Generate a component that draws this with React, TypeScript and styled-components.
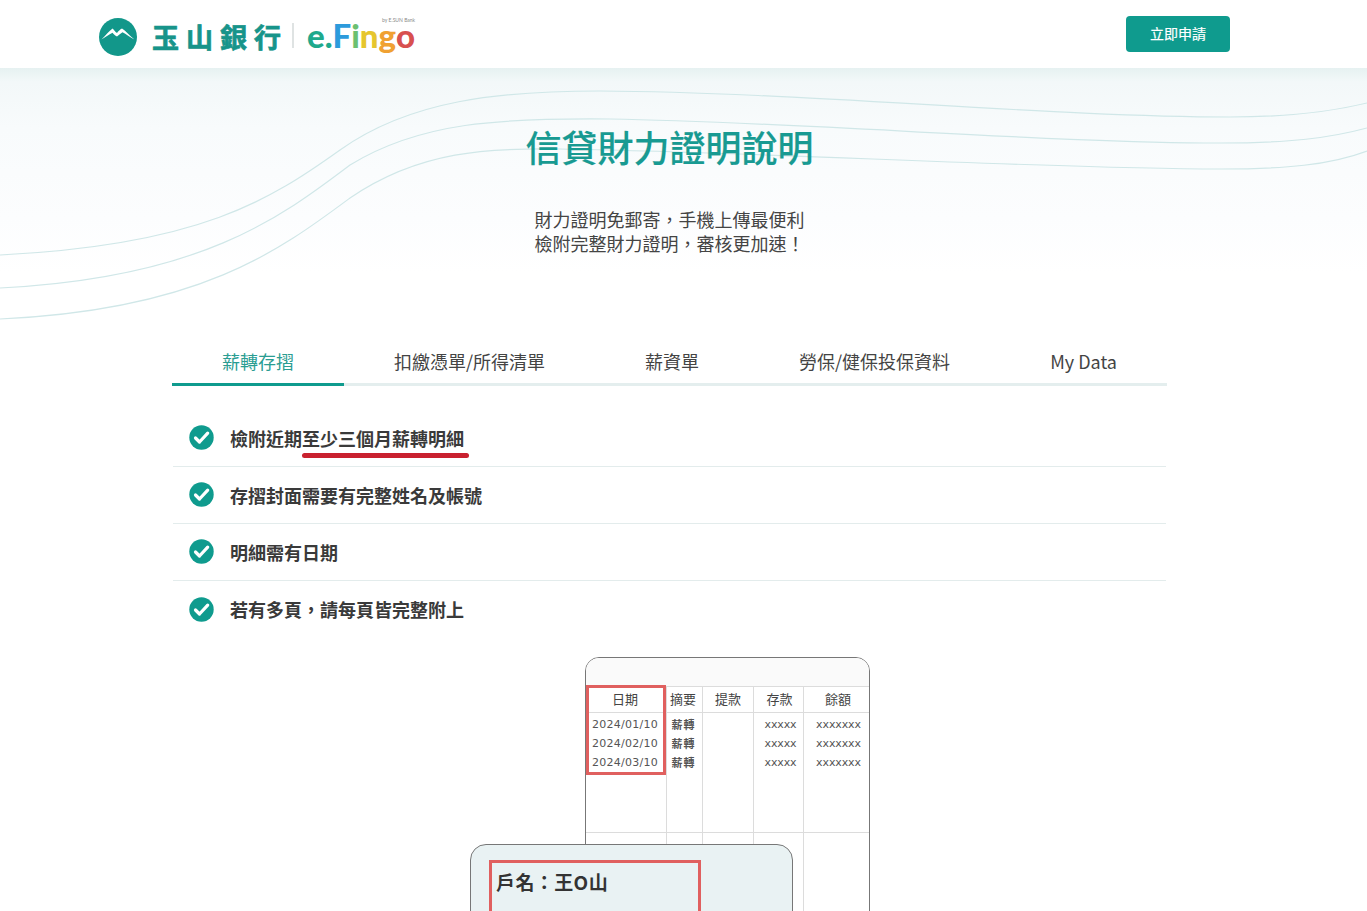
import styled, { createGlobalStyle } from 'styled-components';

const TEAL = '#0f9b8e';
const CJK = `'Noto Sans CJK TC', 'Noto Sans', sans-serif`;

const tabs = ['薪轉存摺', '扣繳憑單/所得清單', '薪資單', '勞保/健保投保資料', 'My Data'];

const tableRows = [
    { date: '2024/01/10', note: '薪轉', deposit: 'xxxxx', balance: 'xxxxxxx' },
    { date: '2024/02/10', note: '薪轉', deposit: 'xxxxx', balance: 'xxxxxxx' },
    { date: '2024/03/10', note: '薪轉', deposit: 'xxxxx', balance: 'xxxxxxx' },
];

const CheckIcon = () => (
    <svg width='25' height='25' viewBox='0 0 25 25'>
        <circle cx='12.5' cy='12.5' r='12.2' fill={TEAL} />
        <path d='M6.5 13l4 4 8.2-8.8' fill='none' stroke='#fff' strokeWidth='3.2' strokeLinecap='round' strokeLinejoin='round' />
    </svg>
);

const BankMark = () => (
    <svg width='38' height='38' viewBox='0 0 38 38'>
        <circle cx='19' cy='19' r='19' fill='#12978a' />
        <path
            d='M2.5 21.5C7 17 10 13 13.5 10.5C15 11.5 16 14 18 15C19.5 13 21 11.5 23 10.5C27 13 31 18 35.5 21.5C31 19.5 27 16 23.5 14.2C21.5 15.6 20 17 18 18.6C16 17.6 14.5 15.8 13.5 14.8C10 16.6 6 19.5 2.5 21.5Z'
            fill='#fff'
        />
    </svg>
);

const WaveLines = () => (
    <Waves width='1367' height='260' viewBox='0 68 1367 260'>
        <path d='M0 255C200 245 270 200 340 150C410 100 500 91 600 91C800 92 1050 117 1230 117C1290 117 1330 112 1367 103' />
        <path d='M0 288C200 278 280 218 350 165C420 122 500 118 610 119C800 122 1050 143 1220 143C1290 143 1330 138 1367 128' />
        <path d='M0 319C200 310 280 250 350 198C420 150 490 148 560 149C760 152 1050 169 1220 169C1285 169 1330 165 1367 151' />
    </Waves>
);

const App = () => {
    return (
        <Page>
            <GlobalStyle />
            <Header>
                <Logo>
                    <BankMark />
                    <BankName>玉山銀行</BankName>
                    <LogoDivider />
                    <Fingo>
                        <FingoTag>by E.SUN Bank</FingoTag>
                        <FingoLetter $color='#1fa98c'>e.</FingoLetter>
                        <FingoLetter $color='#2c9bdc'>F</FingoLetter>
                        <FingoLetter $color='#6cc070'>i</FingoLetter>
                        <FingoLetter $color='#e6c62e'>n</FingoLetter>
                        <FingoLetter $color='#f0a132'>g</FingoLetter>
                        <FingoLetter $color='#d8504f'>o</FingoLetter>
                    </Fingo>
                </Logo>
                <ApplyButton>立即申請</ApplyButton>
            </Header>
            <Hero>
                <WaveLines />
                <Title>信貸財力證明說明</Title>
                <Subtitle>
                    財力證明免郵寄，手機上傳最便利
                    <br />
                    檢附完整財力證明，審核更加速！
                </Subtitle>
            </Hero>
            <Content>
                <Tabs>
                    {tabs.map((tab, index) => (
                        <Tab key={tab} $active={index === 0}>
                            {tab}
                        </Tab>
                    ))}
                </Tabs>
                <CheckList>
                    <CheckItem>
                        <CheckIcon />
                        <span>
                            檢附近期<Underlined>至少三個月薪轉明細</Underlined>
                        </span>
                    </CheckItem>
                    <CheckItem>
                        <CheckIcon />
                        <span>存摺封面需要有完整姓名及帳號</span>
                    </CheckItem>
                    <CheckItem>
                        <CheckIcon />
                        <span>明細需有日期</span>
                    </CheckItem>
                    <CheckItem>
                        <CheckIcon />
                        <span>若有多頁，請每頁皆完整附上</span>
                    </CheckItem>
                </CheckList>
                <Illustration>
                    <Passbook>
                        <PassbookTop />
                        <LedgerGrid>
                            <LedgerHead $shift={-2}>日期</LedgerHead>
                            <LedgerHead $shift={-3}>摘要</LedgerHead>
                            <LedgerHead>提款</LedgerHead>
                            <LedgerHead $shift={2}>存款</LedgerHead>
                            <LedgerHead $shift={3}>餘額</LedgerHead>
                            <DateCell>
                                {tableRows.map((row) => (
                                    <div key={row.date}>{row.date}</div>
                                ))}
                            </DateCell>
                            <NoteCell>
                                {tableRows.map((row) => (
                                    <NoteLine key={row.date}>{row.note}</NoteLine>
                                ))}
                            </NoteCell>
                            <LedgerCell />
                            <AmountCell>
                                {tableRows.map((row) => (
                                    <div key={row.date}>{row.deposit}</div>
                                ))}
                            </AmountCell>
                            <AmountCell>
                                {tableRows.map((row) => (
                                    <div key={row.date}>{row.balance}</div>
                                ))}
                            </AmountCell>
                            <LedgerFoot />
                            <LedgerFoot />
                            <LedgerFoot />
                            <LedgerFoot />
                            <LedgerFoot />
                        </LedgerGrid>
                        <DateHighlight />
                    </Passbook>
                    <CoverCard>
                        <NameHighlight>
                            <AccountName>戶名：王O山</AccountName>
                        </NameHighlight>
                    </CoverCard>
                </Illustration>
            </Content>
        </Page>
    );
};

const GlobalStyle = createGlobalStyle`
    html, body {
        margin: 0;
        padding: 0;
        background: #fff;
        font-family: ${CJK};
    }
`;

const Page = styled.div`
    position: relative;
    height: 911px;
    overflow: hidden;
    background: #fff;
`;

const Header = styled.header`
    position: relative;
    z-index: 2;
    display: flex;
    align-items: center;
    justify-content: space-between;
    height: 68px;
    padding: 0 137px 0 99px;
    background: #fff;
    box-sizing: border-box;
`;

const Logo = styled.div`
    display: flex;
    align-items: center;
    margin-top: 6px;
`;

const BankName = styled.div`
    margin-left: 15px;
    width: 136px;
    color: #17948a;
    font-size: 27px;
    font-weight: 700;
    line-height: 38px;
    letter-spacing: 7px;
    white-space: nowrap;
    -webkit-text-stroke: 0.7px #17948a;
`;

const LogoDivider = styled.div`
    width: 2px;
    height: 25px;
    margin: -4px 13px 0 4px;
    background: #dfe3e3;
`;

const Fingo = styled.div`
    position: relative;
    display: flex;
    margin-top: -5px;
    font-family: 'Lato', sans-serif;
    font-size: 33px;
    font-weight: 900;
    line-height: 28px;
`;

const FingoTag = styled.span`
    position: absolute;
    top: -4px;
    right: 0;
    color: #8a8a8a;
    font-size: 5px;
    font-weight: 400;
    line-height: 6px;
    white-space: nowrap;
`;

const FingoLetter = styled.span<{ $color: string }>`
    color: ${(props) => props.$color};
`;

const ApplyButton = styled.button`
    width: 104px;
    height: 36px;
    padding: 0 0 1px;
    border: none;
    border-radius: 4px;
    background: ${TEAL};
    color: #fff;
    font-family: ${CJK};
    font-size: 14px;
    line-height: 35px;
    -webkit-text-stroke: 0.2px #fff;
`;

const Hero = styled.section`
    position: relative;
    height: 272px;
    padding: 53px 0 0 172px;
    box-sizing: border-box;
    background: linear-gradient(180deg, #e6f1f1 0, #f3f8f9 14px, #f8fbfc 60px, #fcfdfe 150px, #fff 205px);
`;

const Waves = styled.svg`
    position: absolute;
    top: 0;
    left: 0;
    overflow: visible;

    path {
        fill: none;
        stroke: #d0e7e8;
        stroke-width: 1.2;
    }
`;

const Title = styled.h1`
    position: relative;
    width: 995px;
    margin: 0;
    color: #189a92;
    font-size: 36px;
    font-weight: 500;
    line-height: 50px;
    text-align: center;
    -webkit-text-stroke: 0.15px #189a92;
`;

const Subtitle = styled.p`
    position: relative;
    width: 995px;
    margin: 36px 0 0;
    color: #444;
    font-size: 18px;
    line-height: 24px;
    text-align: center;
`;

const Content = styled.main`
    position: relative;
    width: 995px;
    margin-left: 172px;
`;

const Tabs = styled.nav`
    display: flex;
    border-bottom: 3px solid #e4eeee;
`;

const Tab = styled.div<{ $active: boolean }>`
    height: 43px;
    margin-bottom: -3px;
    padding: 0 50px;
    border-bottom: 3px solid ${(props) => (props.$active ? TEAL : 'transparent')};
    color: ${(props) => (props.$active ? '#2a9d92' : '#444')};
    font-size: 18px;
    line-height: 42px;
    white-space: nowrap;
`;

const CheckList = styled.ul`
    margin: 24px 1px 0 0;
    padding: 0 0 0 1px;
    list-style: none;
`;

const CheckItem = styled.li`
    display: flex;
    align-items: center;
    gap: 16px;
    height: 57px;
    padding: 0 0 1px 16px;
    box-sizing: border-box;
    border-bottom: 1px solid #e3ecec;
    color: #3a3a3a;
    font-size: 18px;
    font-weight: 700;
    line-height: 24px;

    &:last-child {
        border-bottom: none;
    }
`;

const Underlined = styled.span`
    position: relative;

    &::after {
        content: '';
        position: absolute;
        left: 0;
        right: -5px;
        bottom: -7px;
        height: 5px;
        border-radius: 3px;
        background: #c9212f;
    }
`;

const Illustration = styled.div`
    position: relative;
    height: 400px;
    margin-top: 19px;
`;

const Passbook = styled.div`
    position: relative;
    width: 285px;
    margin-left: 413px;
    border: 1px solid #777;
    border-radius: 14px 14px 0 0;
    box-sizing: border-box;
    overflow: hidden;
    background: #fff;
`;

const PassbookTop = styled.div`
    height: 28px;
    background: #fafafa;
    border-bottom: 1px solid #dcdcdc;
`;

const LedgerGrid = styled.div`
    display: grid;
    grid-template-columns: 81px 36px 51px 50px 1fr;
    grid-template-rows: 26px 120px 200px;
    font-family: 'DejaVu Sans', ${CJK};
`;

const LedgerHead = styled.div<{ $shift?: number }>`
    display: flex;
    align-items: center;
    justify-content: center;
    padding-bottom: 2px;
    padding-left: ${(props) => Math.max(props.$shift ?? 0, 0)}px;
    padding-right: ${(props) => Math.max(-(props.$shift ?? 0), 0)}px;
    border-bottom: 1px solid #dcdcdc;
    border-right: 1px solid #dcdcdc;
    color: #444;
    font-family: ${CJK};
    font-size: 13px;

    &:nth-child(5) {
        border-right: none;
    }
`;

const LedgerCell = styled.div`
    padding-top: 2px;
    border-bottom: 1px solid #dcdcdc;
    border-right: 1px solid #dcdcdc;
    color: #555;
    font-size: 11px;
    line-height: 19px;
    text-align: center;
`;

const DateCell = styled(LedgerCell)`
    padding-right: 2px;
    letter-spacing: 0.25px;
`;

const NoteCell = styled(LedgerCell)`
    padding-right: 2px;
`;

const AmountCell = styled(LedgerCell)`
    padding-left: 4px;
    letter-spacing: -0.1px;

    &:nth-child(10) {
        border-right: none;
    }
`;

const NoteLine = styled.div`
    font-family: ${CJK};
    font-weight: 700;
    letter-spacing: 1px;
`;

const LedgerFoot = styled.div`
    border-right: 1px solid #dcdcdc;

    &:last-child {
        border-right: none;
    }
`;

const DateHighlight = styled.div`
    position: absolute;
    top: 27px;
    left: 0;
    width: 80px;
    height: 90px;
    border: 3px solid #e0605f;
    box-sizing: border-box;
`;

const CoverCard = styled.div`
    position: absolute;
    top: 187px;
    left: 298px;
    width: 323px;
    height: 200px;
    padding: 15px 0 0 18px;
    box-sizing: border-box;
    border: 1px solid #777;
    border-radius: 16px;
    background: #e9f2f3;
`;

const NameHighlight = styled.div`
    width: 212px;
    height: 120px;
    padding: 2px 0 0 4px;
    box-sizing: border-box;
    border: 3px solid #e0605f;
`;

const AccountName = styled.div`
    color: #333;
    font-size: 19px;
    font-weight: 700;
    line-height: 34px;
    letter-spacing: 0.4px;
    white-space: nowrap;
`;

export default App;
